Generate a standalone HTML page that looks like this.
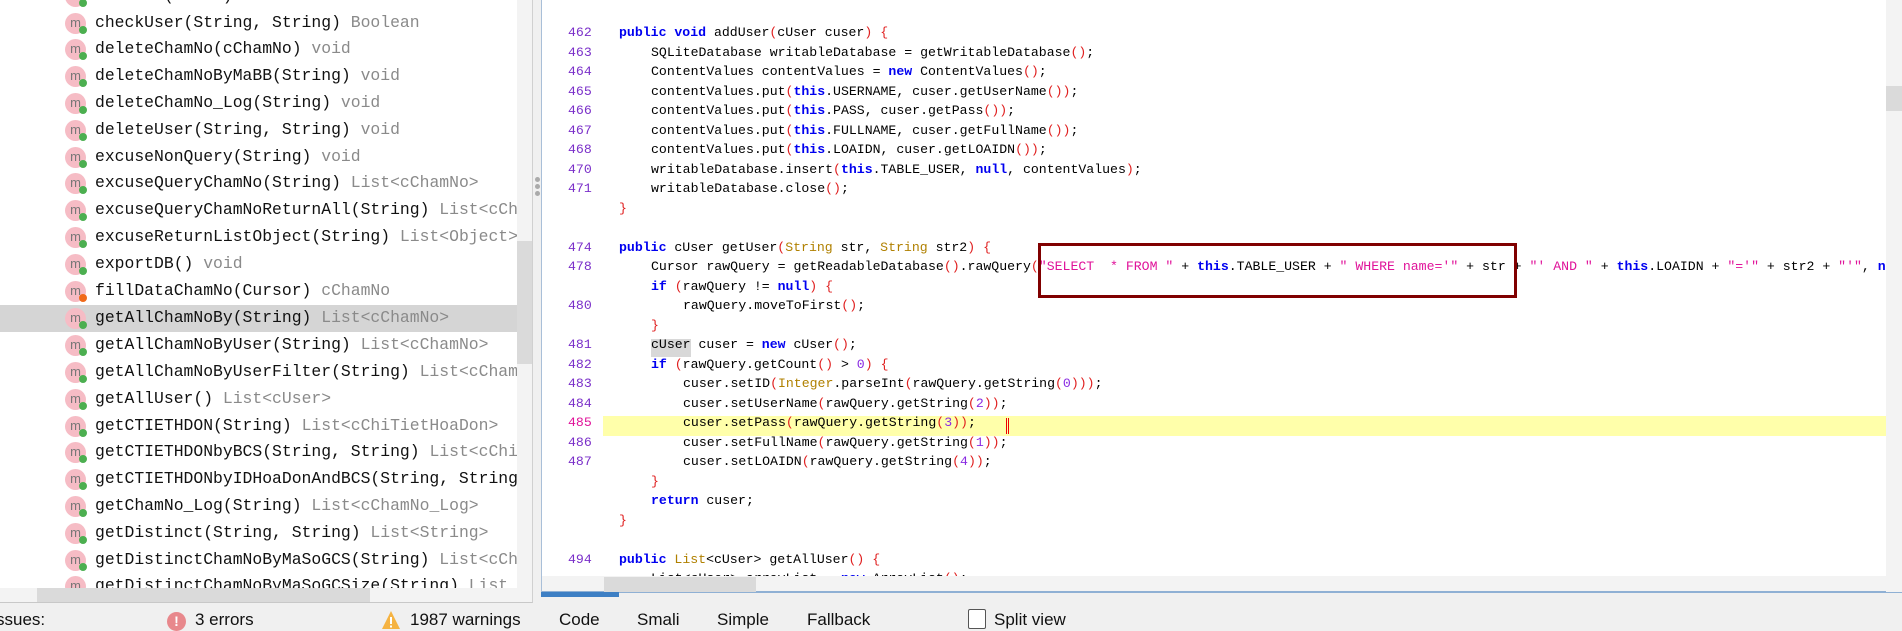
<!DOCTYPE html>
<html><head><meta charset="utf-8"><style>
*{margin:0;padding:0;box-sizing:border-box}
body{width:1902px;height:631px;overflow:hidden;background:#f0f0f0;position:relative;font-family:"Liberation Sans",sans-serif}
#left{position:absolute;left:0;top:0;width:533px;height:603px;background:#fff;overflow:hidden;border-right:1px solid #d0d0d0;border-bottom:1px solid #c8c8c8}
.row{position:absolute;left:0;width:517px;height:26.8px;font-family:"Liberation Mono",monospace;font-size:16.4px;line-height:26.8px;color:#111;white-space:nowrap;overflow:hidden}
.row.sel{background:#d5d5d5}
.row .t{position:absolute;left:95px;top:0}
.row .g{color:#8a8a8a}
.ic{position:absolute;left:65px;top:3px;width:21px;height:21px;border-radius:50%;background:#f6bcc5;font-size:13px;line-height:20px;text-align:center;color:#777;font-family:"Liberation Sans",sans-serif}
.dot{position:absolute;left:79px;top:16px;width:8px;height:8px;border-radius:50%;background:#4caf50}
#lvs{position:absolute;left:517px;top:0;width:15px;height:588px;background:#f3f3f3}
#lvt{position:absolute;left:517px;top:241px;width:15px;height:123px;background:#dadada}
#lhs{position:absolute;left:0;top:588px;width:532px;height:14px;background:#f3f3f3}
#lht{position:absolute;left:37px;top:588px;width:333px;height:14px;background:#dadada}
#ed{position:absolute;left:541px;top:0;width:1361px;height:593px;background:#fff;border-left:1px solid #a9bfd8;border-bottom:2px solid #8fb0d4;overflow:hidden}
.ln{position:absolute;left:568px;width:40px;font-family:"Liberation Mono",monospace;font-size:13.2px;color:#7a2fc9;line-height:19.5px}
.cl{position:absolute;font-family:"Liberation Mono",monospace;font-size:13.2px;line-height:19.5px;white-space:pre;color:#000}
.k{color:#0000f0;font-weight:bold}.p{color:#e02020}.s{color:#e0139a}.ty{color:#b08000}.n{color:#8a2be2}
#evs{position:absolute;left:1886px;top:0;width:16px;height:592px;background:#f3f3f3}
#evt{position:absolute;left:1886px;top:86px;width:16px;height:25px;background:#dadada}
#ehs{position:absolute;left:542px;top:576px;width:1344px;height:15px;background:#f3f3f3}
#eht{position:absolute;left:604px;top:577px;width:152px;height:15px;background:#dadada}
.st{position:absolute;font-size:17px;color:#111;top:609px;line-height:22px}
</style></head><body>
<div id="left">
<div class="row" style="top:-17px"><div class="ic">m</div><div class="dot"></div><span class="t">addUser(cUser) <span class="g">void</span></span></div>
<div class="row" style="top:9.6px"><div class="ic">m</div><div class="dot"></div><span class="t">checkUser(String, String) <span class="g">Boolean</span></span></div>
<div class="row" style="top:36.4px"><div class="ic">m</div><div class="dot"></div><span class="t">deleteChamNo(cChamNo) <span class="g">void</span></span></div>
<div class="row" style="top:63.2px"><div class="ic">m</div><div class="dot"></div><span class="t">deleteChamNoByMaBB(String) <span class="g">void</span></span></div>
<div class="row" style="top:90px"><div class="ic">m</div><div class="dot"></div><span class="t">deleteChamNo_Log(String) <span class="g">void</span></span></div>
<div class="row" style="top:116.8px"><div class="ic">m</div><div class="dot"></div><span class="t">deleteUser(String, String) <span class="g">void</span></span></div>
<div class="row" style="top:143.6px"><div class="ic">m</div><div class="dot"></div><span class="t">excuseNonQuery(String) <span class="g">void</span></span></div>
<div class="row" style="top:170.4px"><div class="ic">m</div><div class="dot"></div><span class="t">excuseQueryChamNo(String) <span class="g">List&lt;cChamNo&gt;</span></span></div>
<div class="row" style="top:197.2px"><div class="ic">m</div><div class="dot"></div><span class="t">excuseQueryChamNoReturnAll(String) <span class="g">List&lt;cChamNo&gt;</span></span></div>
<div class="row" style="top:224px"><div class="ic">m</div><div class="dot"></div><span class="t">excuseReturnListObject(String) <span class="g">List&lt;Object&gt;</span></span></div>
<div class="row" style="top:250.8px"><div class="ic">m</div><div class="dot"></div><span class="t">exportDB() <span class="g">void</span></span></div>
<div class="row" style="top:277.6px"><div class="ic">m</div><div class="dot" style="background:#f06a1a"></div><span class="t">fillDataChamNo(Cursor) <span class="g">cChamNo</span></span></div>
<div class="row sel" style="top:305.4px"><div class="ic">m</div><div class="dot"></div><span class="t">getAllChamNoBy(String) <span class="g">List&lt;cChamNo&gt;</span></span></div>
<div class="row" style="top:332.2px"><div class="ic">m</div><div class="dot"></div><span class="t">getAllChamNoByUser(String) <span class="g">List&lt;cChamNo&gt;</span></span></div>
<div class="row" style="top:359px"><div class="ic">m</div><div class="dot"></div><span class="t">getAllChamNoByUserFilter(String) <span class="g">List&lt;cChamNo&gt;</span></span></div>
<div class="row" style="top:385.8px"><div class="ic">m</div><div class="dot"></div><span class="t">getAllUser() <span class="g">List&lt;cUser&gt;</span></span></div>
<div class="row" style="top:412.6px"><div class="ic">m</div><div class="dot"></div><span class="t">getCTIETHDON(String) <span class="g">List&lt;cChiTietHoaDon&gt;</span></span></div>
<div class="row" style="top:439.4px"><div class="ic">m</div><div class="dot"></div><span class="t">getCTIETHDONbyBCS(String, String) <span class="g">List&lt;cChiTiet&gt;</span></span></div>
<div class="row" style="top:466.2px"><div class="ic">m</div><div class="dot"></div><span class="t">getCTIETHDONbyIDHoaDonAndBCS(String, String)</span></div>
<div class="row" style="top:493px"><div class="ic">m</div><div class="dot"></div><span class="t">getChamNo_Log(String) <span class="g">List&lt;cChamNo_Log&gt;</span></span></div>
<div class="row" style="top:519.8px"><div class="ic">m</div><div class="dot"></div><span class="t">getDistinct(String, String) <span class="g">List&lt;String&gt;</span></span></div>
<div class="row" style="top:546.6px"><div class="ic">m</div><div class="dot"></div><span class="t">getDistinctChamNoByMaSoGCS(String) <span class="g">List&lt;cChamNo&gt;</span></span></div>
<div class="row" style="top:573.4px"><div class="ic">m</div><div class="dot"></div><span class="t">getDistinctChamNoByMaSoGCSize(String) <span class="g">List</span></span></div>
<div id="lvs"></div><div id="lvt"></div><div id="lhs"></div><div id="lht"></div>
</div>
<div style="position:absolute;left:535px;top:177px;width:5px;height:5px;border-radius:50%;background:#aaa"></div>
<div style="position:absolute;left:535px;top:184px;width:5px;height:5px;border-radius:50%;background:#aaa"></div>
<div style="position:absolute;left:535px;top:191px;width:5px;height:5px;border-radius:50%;background:#aaa"></div>

<div id="ed"></div>
<div style="position:absolute;left:603px;top:416px;width:1283px;height:19.5px;background:#ffffaa"></div>
<div style="position:absolute;left:651px;top:339px;width:40px;height:18px;background:#d8d8d8"></div>

<div class="cl" style="left:651px;top:-16px"><span class="p">}</span></div>

<div class="ln" style="top:23px">462</div><div class="cl" style="left:619px;top:23px"><span class="k">public void</span> addUser<span class="p">(</span>cUser cuser<span class="p">)</span> <span class="p">{</span></div>
<div class="ln" style="top:42.5px">463</div><div class="cl" style="left:651px;top:42.5px">SQLiteDatabase writableDatabase = getWritableDatabase<span class="p">()</span>;</div>
<div class="ln" style="top:62px">464</div><div class="cl" style="left:651px;top:62px">ContentValues contentValues = <span class="k">new</span> ContentValues<span class="p">()</span>;</div>
<div class="ln" style="top:81.5px">465</div><div class="cl" style="left:651px;top:81.5px">contentValues.put<span class="p">(</span><span class="k">this</span>.USERNAME, cuser.getUserName<span class="p">())</span>;</div>
<div class="ln" style="top:101px">466</div><div class="cl" style="left:651px;top:101px">contentValues.put<span class="p">(</span><span class="k">this</span>.PASS, cuser.getPass<span class="p">())</span>;</div>
<div class="ln" style="top:120.5px">467</div><div class="cl" style="left:651px;top:120.5px">contentValues.put<span class="p">(</span><span class="k">this</span>.FULLNAME, cuser.getFullName<span class="p">())</span>;</div>
<div class="ln" style="top:140px">468</div><div class="cl" style="left:651px;top:140px">contentValues.put<span class="p">(</span><span class="k">this</span>.LOAIDN, cuser.getLOAIDN<span class="p">())</span>;</div>
<div class="ln" style="top:159.5px">470</div><div class="cl" style="left:651px;top:159.5px">writableDatabase.insert<span class="p">(</span><span class="k">this</span>.TABLE_USER, <span class="k">null</span>, contentValues<span class="p">)</span>;</div>
<div class="ln" style="top:179px">471</div><div class="cl" style="left:651px;top:179px">writableDatabase.close<span class="p">()</span>;</div>
<div class="cl" style="left:619px;top:198.5px"><span class="p">}</span></div>
<div class="ln" style="top:237.5px">474</div><div class="cl" style="left:619px;top:237.5px"><span class="k">public</span> cUser getUser<span class="p">(</span><span class="ty">String</span> str, <span class="ty">String</span> str2<span class="p">)</span> <span class="p">{</span></div>
<div class="ln" style="top:257px">478</div><div class="cl" style="left:651px;top:257px">Cursor rawQuery = getReadableDatabase<span class="p">()</span>.rawQuery<span class="p">(</span><span class="s">"SELECT  * FROM "</span> + <span class="k">this</span>.TABLE_USER + <span class="s">" WHERE name='"</span> + str + <span class="s">"' AND "</span> + <span class="k">this</span>.LOAIDN + <span class="s">"='"</span> + str2 + <span class="s">"'"</span>, <span class="k">null</span><span class="p">)</span>;</div>
<div class="cl" style="left:651px;top:276.5px"><span class="k">if</span> <span class="p">(</span>rawQuery != <span class="k">null</span><span class="p">)</span> <span class="p">{</span></div>
<div class="ln" style="top:296px">480</div><div class="cl" style="left:683px;top:296px">rawQuery.moveToFirst<span class="p">()</span>;</div>
<div class="cl" style="left:651px;top:315.5px"><span class="p">}</span></div>
<div class="ln" style="top:335px">481</div><div class="cl" style="left:651px;top:335px">cUser cuser = <span class="k">new</span> cUser<span class="p">()</span>;</div>
<div class="ln" style="top:354.5px">482</div><div class="cl" style="left:651px;top:354.5px"><span class="k">if</span> <span class="p">(</span>rawQuery.getCount<span class="p">()</span> &gt; <span class="n">0</span><span class="p">)</span> <span class="p">{</span></div>
<div class="ln" style="top:374px">483</div><div class="cl" style="left:683px;top:374px">cuser.setID<span class="p">(</span><span class="ty">Integer</span>.parseInt<span class="p">(</span>rawQuery.getString<span class="p">(</span><span class="n">0</span><span class="p">)))</span>;</div>
<div class="ln" style="top:393.5px">484</div><div class="cl" style="left:683px;top:393.5px">cuser.setUserName<span class="p">(</span>rawQuery.getString<span class="p">(</span><span class="n">2</span><span class="p">))</span>;</div>
<div class="ln" style="top:413px;color:#e0139a">485</div><div class="cl" style="left:683px;top:413px">cuser.setPass<span class="p">(</span>rawQuery.getString<span class="p">(</span><span class="n">3</span><span class="p">))</span>;</div>
<div style="position:absolute;left:1006px;top:418px;width:3px;height:16px;border-left:1px solid #e00;border-right:1px solid #e00"></div>
<div class="ln" style="top:432.5px">486</div><div class="cl" style="left:683px;top:432.5px">cuser.setFullName<span class="p">(</span>rawQuery.getString<span class="p">(</span><span class="n">1</span><span class="p">))</span>;</div>
<div class="ln" style="top:452px">487</div><div class="cl" style="left:683px;top:452px">cuser.setLOAIDN<span class="p">(</span>rawQuery.getString<span class="p">(</span><span class="n">4</span><span class="p">))</span>;</div>
<div class="cl" style="left:651px;top:471.5px"><span class="p">}</span></div>
<div class="cl" style="left:651px;top:491px"><span class="k">return</span> cuser;</div>
<div class="cl" style="left:619px;top:510.5px"><span class="p">}</span></div>
<div class="ln" style="top:549.5px">494</div><div class="cl" style="left:619px;top:549.5px"><span class="k">public</span> <span class="ty">List</span>&lt;cUser&gt; getAllUser<span class="p">()</span> <span class="p">{</span></div>
<div class="cl" style="left:651px;top:569px">List&lt;cUser&gt; arrayList = <span class="k">new</span> ArrayList<span class="p">()</span>;</div>

<div style="position:absolute;left:1038px;top:243px;width:479px;height:55px;border:3px solid #800000"></div>

<div id="evs"></div><div id="evt"></div><div id="ehs"></div><div id="eht"></div>
<div style="position:absolute;left:541px;top:593px;width:1361px;height:38px;background:#f0f0f0"></div>
<div style="position:absolute;left:541px;top:592px;width:78px;height:5px;background:#3d7fc4"></div>

<div class="st" style="left:-4px">ssues:</div>
<div style="position:absolute;left:167px;top:612px;width:19px;height:19px;border-radius:50%;background:#e8888c;color:#fff;font-weight:bold;font-size:14px;text-align:center;line-height:19px">!</div>
<div class="st" style="left:195px">3 errors</div>
<svg style="position:absolute;left:381px;top:610px" width="20" height="20" viewBox="0 0 20 20"><path d="M10 1 L19 19 L1 19 Z" fill="#f5b342"/><rect x="9" y="7" width="2" height="7" fill="#fff"/><rect x="9" y="15.5" width="2" height="2" fill="#fff"/></svg>
<div class="st" style="left:410px">1987 warnings</div>
<div class="st" style="left:559px">Code</div>
<div class="st" style="left:637px">Smali</div>
<div class="st" style="left:717px">Simple</div>
<div class="st" style="left:807px">Fallback</div>
<div style="position:absolute;left:968px;top:609px;width:18px;height:20px;border:1px solid #555;background:#fff;border-radius:2px"></div>
<div class="st" style="left:994px">Split view</div>
</body></html>
